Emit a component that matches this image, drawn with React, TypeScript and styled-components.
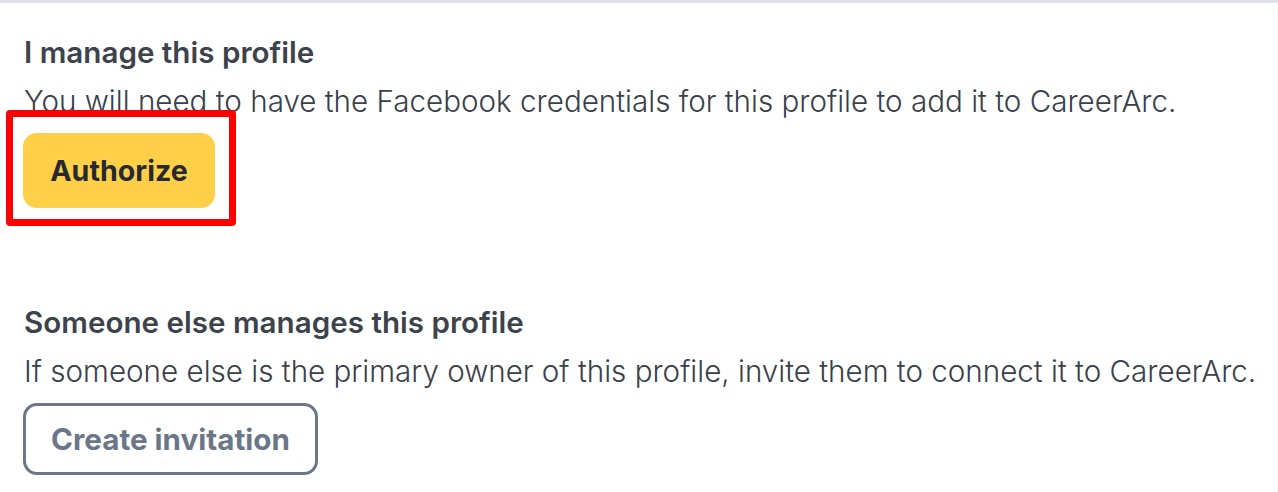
import React from 'react';
import styled, { createGlobalStyle } from 'styled-components';

const GlobalStyle = createGlobalStyle`
  html, body {
    margin: 0;
    padding: 0;
    background: #ffffff;
  }
  body {
    font-family: Inter, "Noto Sans", sans-serif;
  }
`;

const Page = styled.div`
  width: 1278px;
  height: 492px;
  box-sizing: border-box;
  border-top: 3px solid #dde1e6;
  border-right: 1px solid #f2f3f5;
  padding: 27px 0 0 24px;
  overflow: hidden;
`;

const Section = styled.section<{ gap?: number }>`
  display: flex;
  flex-direction: column;
  align-items: flex-start;
  margin-top: ${(props) => props.gap || 0}px;
`;

const Heading = styled.h2`
  margin: 0;
  font-size: 29.6px;
  line-height: 44px;
  font-weight: 600;
  color: #3d434c;
`;

const Text = styled.p`
  margin: 5px 0 0;
  font-size: 29.6px;
  line-height: 44px;
  font-weight: 300;
  color: #3a404a;
`;

const Actions = styled.div`
  position: relative;
  margin-top: 10px;
  margin-left: -1px;
`;

const Button = styled.button<{ variant: 'primary' | 'outline' }>`
  box-sizing: border-box;
  display: inline-flex;
  align-items: center;
  justify-content: center;
  font-family: Inter, "Noto Sans", sans-serif;
  font-weight: 700;
  font-size: 28.6px;
  border-radius: 14px;
  cursor: pointer;
  ${(props) =>
    props.variant === 'primary'
      ? `
    width: 192px;
    height: 75px;
    padding: 0;
    background: #ffcf48;
    color: #262a30;
    border: none;
  `
      : `
    width: 295px;
    height: 72px;
    padding: 0;
    background: #ffffff;
    color: #6b7789;
    border: 3px solid #6b7789;
    font-size: 29.6px;
  `}
`;

const Highlight = styled.div`
  position: absolute;
  left: -17px;
  top: -23px;
  width: 230px;
  height: 116px;
  box-sizing: border-box;
  border: 7px solid #ff0000;
  border-radius: 4px;
  pointer-events: none;
`;

export default function App() {
  return (
    <>
      <GlobalStyle />
      <Page>
        <Section>
          <Heading>I manage this profile</Heading>
          <Text>You will need to have the Facebook credentials for this profile to add it to CareerArc.</Text>
          <Actions>
            <Button variant="primary">Authorize</Button>
            <Highlight />
          </Actions>
        </Section>
        <Section gap={92}>
          <Heading>Someone else manages this profile</Heading>
          <Text>If someone else is the primary owner of this profile, invite them to connect it to CareerArc.</Text>
          <Actions>
            <Button variant="outline">Create invitation</Button>
          </Actions>
        </Section>
      </Page>
    </>
  );
}
